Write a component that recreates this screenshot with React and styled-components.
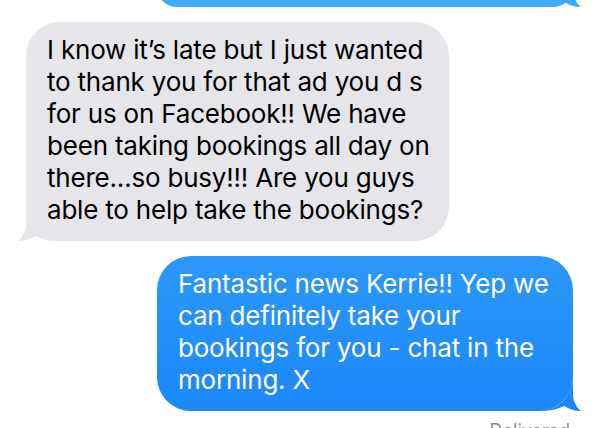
import styled, { createGlobalStyle } from 'styled-components';

const GlobalStyle = createGlobalStyle`
    html, body {
        margin:0;
        background:#ffffff;
        overflow:hidden;
    }
    body {
        font-family:Inter, "Liberation Sans", sans-serif;
        -webkit-font-smoothing:antialiased;
    }
`

const Thread = styled.main`
    display:flex;
    flex-direction:column;
    gap:15px;
    padding:0 26px;
    width:599px;
    height:428px;
    box-sizing:border-box;
    overflow:hidden;
`

const Row = styled.div`
    display:flex;
    flex-direction:column;
    align-items:${props => props.$mine ? 'flex-end' : 'flex-start'};
    margin-top:${props => props.$offset || 0}px;
`

const Bubble = styled.div`
    position:relative;
    box-sizing:border-box;
    padding:12px 21px 15px;
    border-radius:34px;
    font-size:26px;
    line-height:32px;
    letter-spacing:-0.2px;
    white-space:nowrap;
    color:${props => props.$mine ? '#ffffff' : '#000000'};
    background:${props => props.$mine ? props.$bg : '#e5e5ea'};
    width:${props => props.$width}px;
    min-height:${props => props.$height || 0}px;
`

const Tail = styled.svg`
    position:absolute;
    bottom:0;
    width:43px;
    height:35px;
    ${props => props.$mine ? 'right:-10px;' : 'left:-10px; transform:scaleX(-1);'}
`

const Status = styled.div`
    margin-top:9px;
    padding-right:3px;
    font-size:18px;
    color:#8e8e93;
`

function BubbleTail({ mine, color }) {
    return (
        <Tail $mine={mine} viewBox="0 -4 43 35">
            <path
                d="M0 31 C10 31 18 29 24 26 C29 29 35 31 41 31 C36 27 33 21 33 13 L33 -3 A34 34 0 0 1 0 31 Z"
                fill={color}
            />
        </Tail>
    )
}

export default function App() {
    return (
        <>
            <GlobalStyle />
            <Thread>
                <Row $mine $offset={-33}>
                    <Bubble $mine $bg="#40aaf8" $width={416} $height={40}>
                        <BubbleTail mine color="#40aaf8" />
                    </Bubble>
                </Row>
                <Row>
                    <Bubble $width={423}>
                        I know it’s late but I just wanted<br />
                        to thank you for that ad you d s<br />
                        for us on Facebook!! We have<br />
                        been taking bookings all day on<br />
                        there...so busy!!! Are you guys<br />
                        able to help take the bookings?
                        <BubbleTail color="#e5e5ea" />
                    </Bubble>
                </Row>
                <Row $mine>
                    <Bubble $mine $bg="linear-gradient(180deg, #2c98f8 0%, #1c87f8 100%)" $width={416}>
                        Fantastic news Kerrie!! Yep we<br />
                        can definitely take your<br />
                        bookings for you - chat in the<br />
                        morning. X
                        <BubbleTail mine color="#1c87f8" />
                    </Bubble>
                    <Status>Delivered</Status>
                </Row>
            </Thread>
        </>
    )
}
